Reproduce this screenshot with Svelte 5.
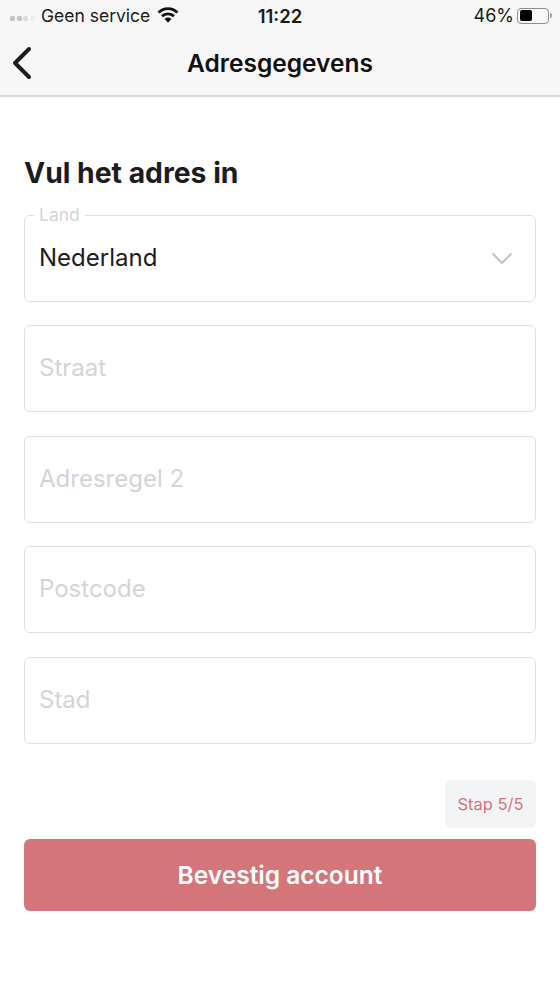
<script lang="ts">
  const fields = ['Straat', 'Adresregel 2', 'Postcode', 'Stad'];
</script>

<div class="screen">
  <header class="topbar">
    <div class="status">
      <div class="status-left">
        <span class="signal"><i></i><i></i><i></i><i></i></span>
        <span class="carrier">Geen service</span>
        <svg class="wifi" width="22" height="16" viewBox="0 0 22 16">
          <path d="M1.500 5.500A13.500 13.500 0 0 1 20.500 5.500" fill="none" stroke="#111" stroke-width="2.800" />
          <path d="M5 9.300A8.500 8.500 0 0 1 17 9.300" fill="none" stroke="#111" stroke-width="2.800" />
          <path d="M11 15.800L7.500 11.900A5 5 0 0 1 14.500 11.900Z" fill="#111" />
        </svg>
      </div>
      <span class="time">11:22</span>
      <div class="status-right">
        <span>46%</span>
        <span class="battery"><span class="battery-fill"></span></span>
        <span class="battery-tip"></span>
      </div>
    </div>
    <div class="navbar">
      <button class="back" aria-label="Terug">
        <svg width="22" height="34" viewBox="0 0 22 34">
          <path d="M18 3 L4 17 L18 31" fill="none" stroke="#1c1c1e" stroke-width="4" stroke-linecap="round" stroke-linejoin="round" />
        </svg>
      </button>
      <h1>Adresgegevens</h1>
    </div>
  </header>

  <main class="content">
    <h2>Vul het adres in</h2>

    <div class="form">
      <div class="field select">
        <span class="legend">Land</span>
        <span class="value">Nederland</span>
        <svg class="chevron" width="22" height="13" viewBox="0 0 22 13">
          <path d="M1.500 1.500 L11 11 L20.500 1.500" fill="none" stroke="#c4c4c6" stroke-width="2" />
        </svg>
      </div>

      {#each fields as field}
        <div class="field">
          <span class="placeholder">{field}</span>
        </div>
      {/each}
    </div>

    <div class="step-row">
      <span class="step">Stap 5/5</span>
    </div>
    <button class="confirm">Bevestig account</button>
  </main>
</div>

<style>
  :global(body) {
    margin: 0;
    background: #fff;
  }

  .screen {
    width: 560px;
    height: 996px;
    overflow: hidden;
    font-family: Inter, "Liberation Sans", sans-serif;
    color: #1c1c1e;
    background: #fff;
  }

  .topbar {
    background: #f7f7f7;
    border-bottom: 2px solid #d9d9d9;
    height: 95px;
  }

  .status {
    height: 31px;
    display: grid;
    grid-template-columns: 1fr auto 1fr;
    align-items: center;
    font-size: 18px;
    color: #1a1a1a;
  }

  .status-left {
    display: flex;
    align-items: center;
    padding-left: 10px;
  }

  .signal {
    display: flex;
    gap: 1.500px;
    width: 31px;
  }

  .signal i {
    width: 5px;
    height: 5px;
    border-radius: 1.500px;
    background: #c4c4c4;
    margin-top: 5px;
  }

  .signal i:nth-child(3) {
    background: #dcdcdc;
  }

  .signal i:nth-child(4) {
    background: #eeeeee;
  }

  .carrier {
    font-size: 17.500px;
  }

  .wifi {
    margin-left: 7px;
    margin-top: -1px;
  }

  .time {
    font-size: 18.500px;
    font-weight: 600;
  }

  .status-right {
    display: flex;
    align-items: center;
    justify-content: flex-end;
    padding-right: 8px;
  }

  .battery {
    width: 32px;
    height: 16px;
    box-sizing: border-box;
    border: 1.500px solid #8e8e8e;
    border-radius: 4px;
    padding: 1.500px;
    margin-left: 3px;
    display: flex;
  }

  .battery-fill {
    width: 12px;
    background: #000;
    border-radius: 2px;
  }

  .battery-tip {
    width: 2px;
    height: 5px;
    background: #a0a0a0;
    margin-left: 1px;
    border-radius: 0 2px 2px 0;
  }

  .navbar {
    height: 64px;
    position: relative;
    display: flex;
    align-items: center;
    justify-content: center;
  }

  .back {
    position: absolute;
    left: 11px;
    top: 15px;
    padding: 0;
    border: 0;
    background: none;
    display: flex;
  }

  h1 {
    margin: 0;
    font-size: 24.500px;
    font-weight: 600;
    color: #111;
  }

  .content {
    padding: 0 24px;
  }

  h2 {
    margin: 58px 0 0;
    font-size: 28.300px;
    line-height: 36px;
    font-weight: 700;
    color: #1c1c1e;
  }

  .form {
    margin-top: 23.700px;
    display: flex;
    flex-direction: column;
    gap: 23.500px;
  }

  .field {
    height: 87px;
    box-sizing: border-box;
    border: 1px solid #dfdfe3;
    border-radius: 6px;
    padding: 0 14px 2px;
    display: flex;
    align-items: center;
    font-size: 24px;
  }

  .select {
    position: relative;
    justify-content: space-between;
  }

  /* sits on the top border, notch like a fieldset legend */
  .legend {
    position: absolute;
    left: 9px;
    top: -11px;
    padding: 0 5px;
    background: #fff;
    font-size: 17.500px;
    line-height: 20px;
    color: #d3d3da;
  }

  .value {
    color: #1c1c1e;
  }

  .chevron {
    margin-right: 8px;
    margin-top: 2px;
  }

  .placeholder {
    color: #d3d3da;
  }

  .step-row {
    display: flex;
    justify-content: flex-end;
    margin-top: 36.300px;
  }

  .step {
    width: 91px;
    height: 48px;
    border-radius: 6px;
    background: #f3f4f6;
    color: #d4757a;
    font-size: 16.500px;
    display: flex;
    align-items: center;
    justify-content: center;
  }

  .confirm {
    display: block;
    width: 100%;
    height: 72px;
    margin-top: 11px;
    border: 0;
    border-radius: 6px;
    background: #d4757a;
    color: #fff;
    font-family: inherit;
    font-size: 24.500px;
    font-weight: 600;
  }
</style>
